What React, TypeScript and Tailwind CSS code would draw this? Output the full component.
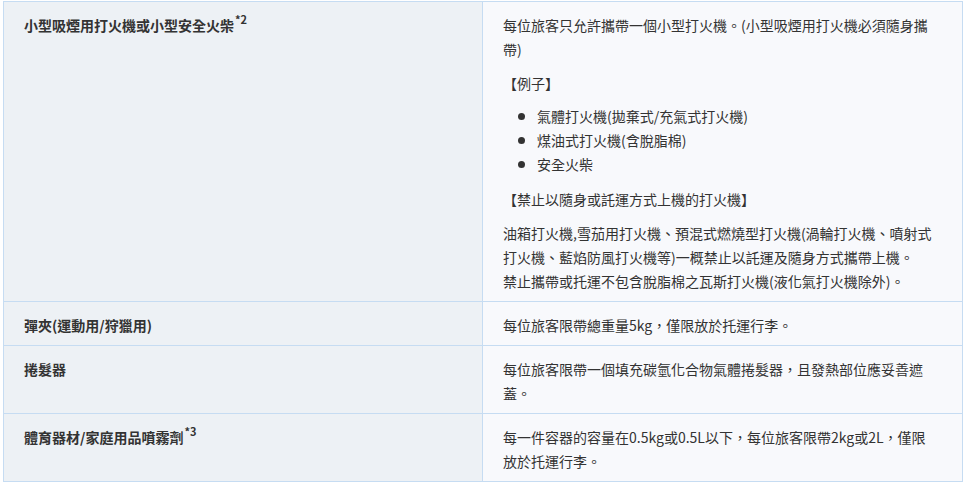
import React from "react";

const font = {
  fontFamily: '"Noto Sans CJK TC", "Noto Sans", sans-serif',
};

function Row({
  label,
  sup,
  children,
}: {
  label: string;
  sup?: string;
  children: React.ReactNode;
}) {
  return (
    <tr>
      <td className="w-[479px] align-top border border-[#c6dcf2] bg-[#edf1f5] pl-5 pr-5 pt-[11px] pb-[8px] text-[14px] leading-6 font-bold text-[#333]">
        {label}
        {sup && (
          <span className="text-[11px] font-bold ml-[1px] relative top-[-7px] leading-none">{sup}</span>
        )}
      </td>
      <td className="align-top border border-[#c6dcf2] bg-[#f8f9fc] pl-5 pr-[26px] pt-[11px] pb-[8px] text-[14px] leading-6 text-[#333]">
        {children}
      </td>
    </tr>
  );
}

function Bullet({ children }: { children: React.ReactNode }) {
  return (
    <li className="flex items-center pl-[15px] gap-[12px]">
      <span className="w-[7px] h-[7px] rounded-full bg-[#333] shrink-0" />
      <span>{children}</span>
    </li>
  );
}

export default function App() {
  return (
    <div className="bg-white w-[968px] h-[488px] pl-[3px] pt-[1px]" style={font}>
      <table className="border-collapse w-[960px] table-fixed">
        <tbody>
          <Row label="小型吸煙用打火機或小型安全火柴" sup="*2">
            <p className="mb-[10px]">
              每位旅客只允許攜帶一個小型打火機。(小型吸煙用打火機必須隨身攜帶)
            </p>
            <p className="mb-[9px]">【例子】</p>
            <ul className="mb-[11px]">
              <Bullet>氣體打火機(拋棄式/充氣式打火機)</Bullet>
              <Bullet>煤油式打火機(含脫脂棉)</Bullet>
              <Bullet>安全火柴</Bullet>
            </ul>
            <p className="mb-[10px]">【禁止以隨身或託運方式上機的打火機】</p>
            <p>
              油箱打火機,雪茄用打火機、預混式燃燒型打火機(渦輪打火機、噴射式打火機、藍焰防風打火機等)一概禁止以託運及隨身方式攜帶上機。
              <br />
              禁止攜帶或托運不包含脫脂棉之瓦斯打火機(液化氣打火機除外)。
            </p>
          </Row>
          <Row label="彈夾(運動用/狩獵用)">
            <p>每位旅客限帶總重量5kg，僅限放於托運行李。</p>
          </Row>
          <Row label="捲髮器">
            <p>
              每位旅客限帶一個填充碳氫化合物氣體捲髮器，且發熱部位應妥善遮蓋。
            </p>
          </Row>
          <Row label="體育器材/家庭用品噴霧劑" sup="*3">
            <p>
              每一件容器的容量在0.5kg或0.5L以下，每位旅客限帶2kg或2L，僅限放於托運行李。
            </p>
          </Row>
        </tbody>
      </table>
    </div>
  );
}
